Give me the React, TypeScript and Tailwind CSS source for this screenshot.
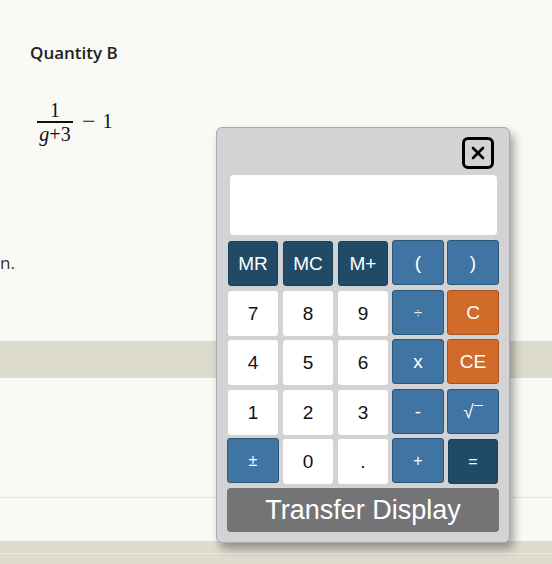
import React from "react";

type Kind = "navy" | "blue" | "orange" | "white";

type Key = { label: React.ReactNode; kind: Kind };

const kindClass: Record<Kind, string> = {
  navy: "bg-[#214a66] text-white border border-[#1b3f58]",
  blue: "bg-[#3f74a3] text-white border border-[#2c5878] -m-px",
  orange: "bg-[#d06b2a] text-white border border-[#a9531f] -m-px",
  white: "bg-white text-[#111]",
};

const Sqrt = () => (
  <span className="inline-flex items-start">
    <span>√</span>
    <span className="mt-[3px] inline-block h-[12px] w-[9px] border-t-[1.5px] border-white" />
  </span>
);

const keys: Key[] = [
  { label: "MR", kind: "navy" },
  { label: "MC", kind: "navy" },
  { label: "M+", kind: "navy" },
  { label: "(", kind: "blue" },
  { label: ")", kind: "blue" },
  { label: "7", kind: "white" },
  { label: "8", kind: "white" },
  { label: "9", kind: "white" },
  { label: <span className="text-[15px] text-[#dfe8f1]">÷</span>, kind: "blue" },
  { label: "C", kind: "orange" },
  { label: "4", kind: "white" },
  { label: "5", kind: "white" },
  { label: "6", kind: "white" },
  { label: "x", kind: "blue" },
  { label: "CE", kind: "orange" },
  { label: "1", kind: "white" },
  { label: "2", kind: "white" },
  { label: "3", kind: "white" },
  { label: "-", kind: "blue" },
  { label: <Sqrt />, kind: "blue" },
  { label: <span className="text-[16px]">±</span>, kind: "blue" },
  { label: "0", kind: "white" },
  { label: ".", kind: "white" },
  { label: <span className="text-[16px]">+</span>, kind: "blue" },
  { label: <span className="text-[16px]">=</span>, kind: "navy" },
];

function Calculator() {
  return (
    <div className="absolute left-[216px] top-[127px] w-[294px] rounded-[6px] border border-[#a9a9ae] bg-[#d3d3d6] pb-[10px] pl-[11px] pr-[10px] pt-[9px] shadow-[4px_6px_10px_rgba(0,0,0,0.35)]">
      <div className="flex justify-end pr-[5px]">
        <button className="flex h-[32px] w-[32px] items-center justify-center rounded-[6px] border-[3px] border-black bg-transparent">
          <svg width="14" height="14" viewBox="0 0 14 14">
            <path d="M2 2 L12 12 M12 2 L2 12" stroke="#000" strokeWidth="2.6" strokeLinecap="round" />
          </svg>
        </button>
      </div>

      {/* Display */}
      <div className="mx-[2px] mt-[6px] h-[60px] rounded-[4px] bg-white" />

      {/* Keypad */}
      <div className="mt-[6px] grid grid-cols-[repeat(5,50px)] gap-x-[5px] gap-y-[4.5px]">
        {keys.map((k, i) => (
          <button
            key={i}
            className={`flex h-[45px] items-center justify-center rounded-[3px] font-['Liberation_Sans',Arial,sans-serif] text-[19px] leading-none ${kindClass[k.kind]}`}
          >
            {k.label}
          </button>
        ))}
      </div>

      <button className="mt-[4px] flex h-[44px] w-[272px] -ml-px items-center justify-center rounded-[4px] bg-[#747476] font-['Liberation_Sans',Arial,sans-serif] text-[27px] leading-none text-white">
        Transfer Display
      </button>
    </div>
  );
}

export default function App() {
  return (
    <div className="relative h-[564px] w-[552px] overflow-hidden bg-[#f9f9f5] font-['Open_Sans','Noto_Sans',sans-serif] text-[#222]">
      <div className="h-[341px] pl-[30px] pt-[42px]">
        <div className="text-[17px] font-semibold leading-[22px]">Quantity B</div>

        {/* Expression */}
        <div className="ml-[7px] mt-[36px] flex items-center font-['Liberation_Serif','Times_New_Roman',serif] text-[20px] leading-none text-[#111]">
          <div className="flex flex-col items-center">
            <span className="px-[2px] pb-[1px]">1</span>
            <span className="h-[1.5px] w-[36px] bg-[#111]" />
            <span className="pt-[1px]">
              <i>g</i>+3
            </span>
          </div>
          <span className="mb-[2px] ml-[9px] text-[24px]">−</span>
          <span className="mb-[2px] ml-[7px]">1</span>
        </div>

        <div className="-ml-[30px] mt-[108px] text-[17px] leading-[22px] text-[#333]">n.</div>
      </div>

      <div className="h-[37px] bg-[#dddbcd]" />
      <div className="h-[120px] border-b border-[#e6e4d8]" />
      <div className="h-[43px]" />
      <div className="h-[13px] border-b border-[#ebe9de] bg-[#dedccf]" />
      <div className="h-[10px] bg-[#dedccf]" />

      <Calculator />
    </div>
  );
}
